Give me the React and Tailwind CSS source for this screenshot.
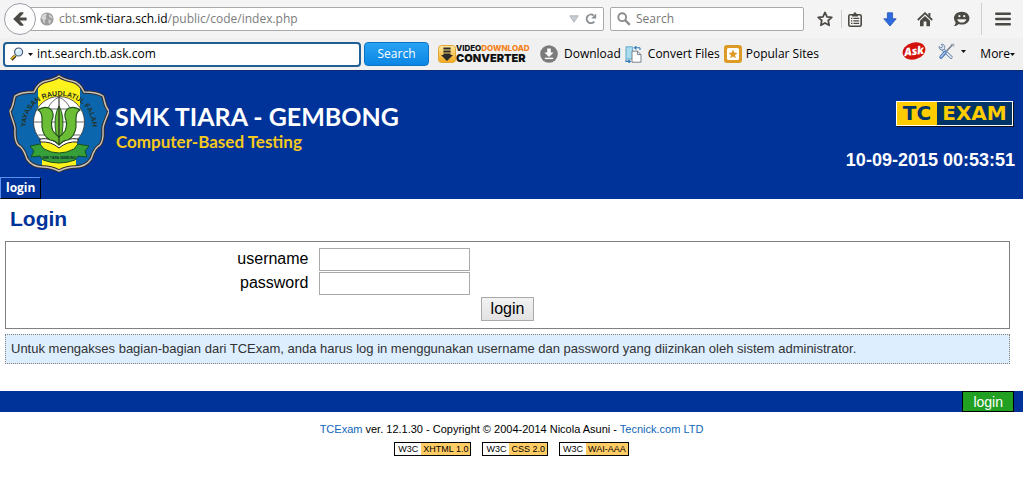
const uiFont = "font-['Open_Sans','Noto_Sans',sans-serif]";

function BackIcon() {
  return (
    <svg viewBox="0 0 16 16" className="size-4">
      <path d="M9 1.2 L11.4 1.2 L11.4 2.6 L7.6 6.5 H14.6 V9.5 H7.6 L11.4 13.4 V14.8 H8.2 L1.2 8 L8 1.2 Z" fill="#4b4943" />
    </svg>
  );
}

function GlobeIcon() {
  return (
    <svg viewBox="0 0 14 14" className="size-3.5">
      <circle cx="7" cy="7" r="6.6" fill="#9c9c9c" />
      <path d="M2 3.5 L5 1.6 L7 2.6 L5.6 4.6 L6.6 6.6 L4.6 8.6 L5.2 11.4 L3.4 10.2 L2.6 7.2 L1 6 Z" fill="#d6d6d6" />
      <path d="M8.8 2 L12 4.4 L12.6 7 L10.6 6 L9 4.6 Z M8.4 7.4 L11.2 8.2 L10.6 10.6 L8.8 12.2 Z" fill="#cfcfcf" />
    </svg>
  );
}

function ReloadIcon() {
  return (
    <svg viewBox="0 0 12 12" className="size-3">
      <path d="M9.3 8.6 A4.3 4.3 0 1 1 8.6 2.4" fill="none" stroke="#8a8f94" strokeWidth="1.9" />
      <path d="M11.2 0.4 V5.4 H6.2 Z" fill="#8a8f94" />
    </svg>
  );
}

function LensIcon() {
  return (
    <svg viewBox="0 0 14 14" className="size-3.5 shrink-0">
      <circle cx="5.2" cy="5.2" r="3.9" fill="none" stroke="#8c8c8c" strokeWidth="1.9" />
      <path d="M8 8 L12.8 12.8" stroke="#8c8c8c" strokeWidth="2.4" />
    </svg>
  );
}

function GoldLensIcon() {
  return (
    <svg viewBox="0 0 14 14" className="size-3.5 shrink-0">
      <path d="M5.4 8.6 L1.4 12.6" stroke="#3b3210" strokeWidth="3.2" />
      <path d="M5 8.4 L1.2 12.2" stroke="#e2b92c" strokeWidth="1.6" />
      <circle cx="8.6" cy="5" r="4" fill="#cfeef9" stroke="#4a5a78" strokeWidth="1.2" />
      <path d="M6.4 4.6 A2.4 2.4 0 0 1 9 2.6" fill="none" stroke="#fff" strokeWidth="1.2" />
    </svg>
  );
}

function StarIcon() {
  return (
    <svg viewBox="0 0 16 16" className="size-4">
      <path d="M8 1.4 L10 5.8 L14.8 6.3 L11.2 9.5 L12.2 14.3 L8 11.9 L3.8 14.3 L4.8 9.5 L1.2 6.3 L6 5.8 Z" fill="none" stroke="#4b4943" strokeWidth="1.7" strokeLinejoin="round" />
    </svg>
  );
}

function ListIcon() {
  return (
    <svg viewBox="0 0 14 15" className="h-[15px] w-3.5">
      <rect x="0.8" y="2.8" width="12.4" height="11.4" rx="1.4" fill="#f6f6f6" stroke="#4b4943" strokeWidth="1.6" />
      <path d="M4 4.4 V2 H5.4 L6 0.4 H8 L8.6 2 H10 V4.4 Z" fill="#4b4943" />
      <path d="M3 6.4 H4.4 M3 8.9 H4.4 M3 11.4 H4.4 M5.4 6.4 H11.2 M5.4 8.9 H11.2 M5.4 11.4 H11.2" stroke="#4b4943" strokeWidth="1.4" />
    </svg>
  );
}

function DownloadsIcon() {
  return (
    <svg viewBox="0 0 14 15" className="h-[15px] w-3.5">
      <path d="M4.4 0.8 H9.6 V6.8 H13.2 L7 14 L0.8 6.8 H4.4 Z" fill="#2f6be0" stroke="#2450b4" strokeWidth="0.8" />
    </svg>
  );
}

function HomeIcon() {
  return (
    <svg viewBox="0 0 16 15" className="h-[15px] w-4">
      <path d="M0.8 8 L8 1.2 L15.2 8" fill="none" stroke="#4b4943" strokeWidth="1.8" />
      <path d="M11.4 1 H13.4 V5 L11.4 3 Z" fill="#4b4943" />
      <path d="M8 4 L13 8.8 V14.2 H9.4 V9.6 H6.6 V14.2 H3 V8.8 Z" fill="#4b4943" />
    </svg>
  );
}

function SmileyIcon() {
  return (
    <svg viewBox="0 0 17 16" className="h-4 w-[17px]">
      <path d="M8.8 0.8 C13.2 0.8 16.4 3.6 16.4 7.2 C16.4 10.9 13.2 13.6 8.8 13.6 C7.6 13.6 6.6 13.4 5.6 13 C4.4 14.4 2.8 15 0.8 15 C2 14 2.6 12.6 2.6 11.2 C1.6 10 1 8.7 1 7.2 C1 3.6 4.4 0.8 8.8 0.8 Z" fill="#4b4943" />
      <circle cx="6.4" cy="5.2" r="1.1" fill="#f1f1f1" />
      <circle cx="11.2" cy="5.2" r="1.1" fill="#f1f1f1" />
      <path d="M4.2 8.2 H13.4 C12.8 10.4 11.2 11.6 8.8 11.6 C6.4 11.6 4.8 10.4 4.2 8.2 Z" fill="#f1f1f1" />
    </svg>
  );
}

function MenuIcon() {
  return (
    <svg viewBox="0 0 16 14" className="h-3.5 w-4">
      <path d="M1.2 1.8 H14.8 M1.2 7 H14.8 M1.2 12.2 H14.8" stroke="#4b4943" strokeWidth="2.4" strokeLinecap="round" />
    </svg>
  );
}

function Caret() {
  return (
    <svg viewBox="0 0 5 3" className="h-[3px] w-[5px] shrink-0">
      <path d="M0 0 H5 L2.5 3 Z" fill="#111" />
    </svg>
  );
}

function ConverterLogo() {
  return (
    <a href="#converter" aria-label="Video Download Converter" className="flex items-center">
      <svg viewBox="0 0 18 18" className="size-[18px] shrink-0">
        <defs>
          <linearGradient id="gold" x1="0" y1="0" x2="0" y2="1">
            <stop offset="0" stopColor="#ffe9a0" />
            <stop offset="1" stopColor="#f2a81c" />
          </linearGradient>
        </defs>
        <rect x="0.5" y="0.5" width="17" height="17" rx="3" fill="url(#gold)" stroke="#e0a63a" />
        <path d="M5.4 2.6 H12.6 V4.4 H5.4 Z M5.4 5.6 H12.6 V7.4 H5.4 Z M5.4 8.4 H12.6 V10 H15 L9 16 L3 10 H5.4 Z" fill="#2a2a2a" />
      </svg>
      <svg viewBox="0 0 76 22" className="h-[22px] w-[76px] shrink-0" fontFamily="Inter, 'Liberation Sans', sans-serif">
        <text x="0" y="8" fontSize="8" fontWeight="800" fill="#111">
          VIDEO<tspan fill="#f58220">DOWNLOAD</tspan>
        </text>
        <text x="0" y="19" fontSize="11" fontWeight="900" fill="#111">CONVERTER</text>
      </svg>
    </a>
  );
}

function DownloadBadge() {
  return (
    <svg viewBox="0 0 18 18" className="size-[18px] shrink-0">
      <circle cx="9" cy="9" r="8.8" fill="#7b7b7b" />
      <path d="M7.2 3.4 H10.8 V7.4 H13.6 L9 12 L4.4 7.4 H7.2 Z" fill="#fff" />
      <path d="M4.8 13.4 H13.2" fill="none" stroke="#fff" strokeWidth="1.4" />
    </svg>
  );
}

function ConvertIcon() {
  return (
    <svg viewBox="0 0 17 17" className="size-[17px] shrink-0">
      <path d="M1 0.8 H7.6 V13 H1 Z" fill="#a9dcef" stroke="#5aa5c4" strokeWidth="0.9" />
      <path d="M7 5.2 H12.4 L16 8.6 V16.2 H7 Z" fill="#fff" stroke="#6c7780" strokeWidth="0.9" />
      <path d="M12.4 5.2 V8.6 H16" fill="none" stroke="#6c7780" strokeWidth="0.9" />
      <path d="M9.6 1.8 H15 M11.4 0.2 L9.4 1.8 L11.4 3.4 M15 1.8 V4 M1 13.6 V15.4 H5 M3.4 13.8 L5.4 15.4 L3.4 17" fill="none" stroke="#3179b8" strokeWidth="1.1" />
    </svg>
  );
}

function PopularIcon() {
  return (
    <svg viewBox="0 0 18 18" className="size-[18px] shrink-0">
      <rect width="18" height="18" rx="3" fill="#dd9a24" />
      <rect x="3" y="3" width="12" height="12" rx="1.6" fill="#fff" />
      <path d="M9 4.6 L10.3 7.6 L13.5 7.9 L11.1 10 L11.8 13.2 L9 11.5 L6.2 13.2 L6.9 10 L4.5 7.9 L7.7 7.6 Z" fill="#dd9a24" />
    </svg>
  );
}

function AskLogo() {
  return (
    <svg viewBox="0 0 24 20" className="h-5 w-6">
      <ellipse cx="12" cy="10" rx="11.6" ry="8.4" fill="#d4120c" transform="rotate(-16 12 10)" />
      <text x="12" y="14" fontFamily="'Open Sans', sans-serif" fontSize="11" fontWeight="800" fontStyle="italic" fill="#fff" textAnchor="middle" transform="rotate(-8 12 10)">Ask</text>
    </svg>
  );
}

function ToolsIcon() {
  return (
    <svg viewBox="0 0 17 17" className="size-[17px]">
      <path d="M4 5.6 L13 14.2" stroke="#56749c" strokeWidth="3.2" strokeLinecap="round" />
      <path d="M4 5.6 L13 14.2" stroke="#e2ecf6" strokeWidth="1.8" strokeLinecap="round" />
      <path d="M1 3.4 L3 5.2 L4.8 3.6 L3.2 1.2 C6 1 7.4 3 6.6 5.4 L5 7 C2.6 7.4 1 6 1 3.4 Z" fill="#e2ecf6" stroke="#56749c" strokeWidth="0.8" />
      <path d="M14.6 1.6 L8.6 8" stroke="#7b8590" strokeWidth="1.6" />
      <path d="M7 9.6 L3 14.2" stroke="#4a74b4" strokeWidth="3.4" strokeLinecap="round" />
      <path d="M7 9.4 L3 14" stroke="#a8c6ee" strokeWidth="1.4" strokeLinecap="round" />
      <path d="M13.4 1.2 L16 1 L15.6 3.4 Z" fill="#dfe6ee" stroke="#7b8590" strokeWidth="0.6" />
    </svg>
  );
}

const crest =
  "M49 2 C53 5 57 6 62 7 C67 8 71 11 74 18 C80 18 87 18 93 22 C95 27 94 32 99 37 C97 43 94 48 93 54 C93 60 94 66 90 71 C84 74 83 80 81 85 C77 91 71 93 65 93 C58 93 53 95 49 97 C45 95 40 93 33 93 C27 93 21 91 17 85 C15 80 14 74 8 71 C4 66 5 60 5 54 C4 48 1 43 0 37 C4 32 3 27 5 22 C11 18 18 18 24 18 C27 11 31 8 36 7 C41 6 45 5 49 2 Z";

function SchoolCrest() {
  return (
    <svg viewBox="-1 0 100 100" className="size-[100px] shrink-0" role="img" aria-label="SMK Tiara Gembong">
      <defs>
        <clipPath id="crest-clip">
          <path d={crest} />
        </clipPath>
        <path id="motto" d="M16 57 C12 10 86 10 82 57" />
      </defs>
      <path d={crest} fill="#0b66ae" />
      <g clipPath="url(#crest-clip)">
        <path d="M28 0 H70 V32 L66 38 V100 H32 V38 L28 32 Z" fill="#fdf21c" />
      </g>
      <path d={crest} fill="none" stroke="#332f30" strokeWidth="3.6" />
      <path d={crest} fill="none" stroke="#c9c4bd" strokeWidth="1.4" />
      <circle cx="49" cy="48" r="25.5" fill="#fff" stroke="#333" strokeWidth="0.8" />
      <path d="M24 48 H74 M28 35 H70 M28 61 H70 M49 23 C30 32 30 64 49 73 M49 23 C68 32 68 64 49 73" fill="none" stroke="#444" strokeWidth="0.8" />
      <path d="M31 68 Q41 64 49 72 Q57 64 67 68 V80 H31 Z" fill="#fdf21c" />
      <path d="M30 65 Q41 63 49 71 Q57 63 68 65 V68 Q57 67 49 74 Q41 67 30 68 Z" fill="#fff" stroke="#222" strokeWidth="1" />
      <path d="M28 36 Q33 32 39 34 Q44 37 43 43 Q40 50 43 57 Q46 61 49 63 Q52 61 55 57 Q58 50 55 43 Q54 37 59 34 Q65 32 70 36 Q66 38 66 45 V53 Q65 62 58 66 Q53 66 49 71 Q45 66 40 66 Q33 62 32 53 V45 Q32 38 28 36 Z" fill="#6abd34" stroke="#1e4d1b" strokeWidth="1.1" />
      <path d="M49 32 Q43 42 46 60 L49 63 L52 60 Q55 42 49 32 Z" fill="#6abd34" stroke="#1e4d1b" strokeWidth="0.9" />
      <path d="M49 23 V70" stroke="#222" strokeWidth="1.1" />
      <path d="M20 72 L30 70 L34 75 Q49 83 64 75 L68 70 L79 72 L75 77 L77 83 L68 82 L65 86 Q49 92 33 86 L30 82 L21 83 L24 77 Z" fill="#35a03a" stroke="#174d1c" strokeWidth="1" />
      <text x="49" y="85" fontFamily="'Liberation Sans', sans-serif" fontSize="3" fontWeight="700" fill="#123" textAnchor="middle">SMK TIARA GEMBONG</text>
      <text fontFamily="'Liberation Sans', sans-serif" fontSize="7" fontWeight="700" fill="#26311c">
        <textPath href="#motto" startOffset="50%" textAnchor="middle">YAYASAN RAUDLATUL FALAH</textPath>
      </text>
    </svg>
  );
}

function NavBar() {
  return (
    <div className="flex h-[38px] items-center bg-[#f4f4f4] pl-1">
      <button aria-label="Back" className="z-10 flex size-8 shrink-0 items-center justify-center rounded-full border border-[#9a9fa8] bg-[#fbfbfb]">
        <BackIcon />
      </button>
      <div className="-ml-2 flex h-6 flex-1 items-center rounded-xs border border-[#a9a9a9] bg-white pr-1.5 pl-[11px]">
        <GlobeIcon />
        <div className="ml-[5px] flex-1 text-xs text-[#7c7c7c]">
          cbt.<span className="text-black">smk-tiara.sch.id</span>/public/code/index.php
        </div>
        <svg viewBox="0 0 10 8" className="mr-1.5 h-2 w-2.5">
          <path d="M0.8 0.8 H9.2 L5 7.2 Z" fill="#c9ccd2" stroke="#a5a9b0" strokeWidth="0.8" />
        </svg>
        <button aria-label="Reload">
          <ReloadIcon />
        </button>
      </div>
      <label className="ml-1.5 flex h-6 w-[194px] items-center gap-[5px] rounded-xs border border-[#a9a9a9] bg-white px-1.5">
        <LensIcon />
        <input aria-label="Search the web" placeholder="Search" className="w-full text-xs outline-none placeholder:text-[#777]" />
      </label>
      <div className="flex items-center pl-[13px]">
        <button aria-label="Bookmark"><StarIcon /></button>
        <div className="ml-2 h-[18px] w-px bg-[#cfcfcf]" />
        <button aria-label="Bookmarks list" className="ml-1.5"><ListIcon /></button>
        <button aria-label="Downloads" className="ml-[21px]"><DownloadsIcon /></button>
        <button aria-label="Home" className="ml-5"><HomeIcon /></button>
        <button aria-label="Chat" className="ml-5"><SmileyIcon /></button>
        <div className="ml-[11px] h-8 w-px bg-[#cfcfcf]" />
        <button aria-label="Menu" className="mr-3 ml-[13px]"><MenuIcon /></button>
      </div>
    </div>
  );
}

function Toolbar() {
  return (
    <div className="flex h-[33px] items-center border-b border-[#0b2a7a] bg-[#f0f0f0] pr-2 pl-[3px]">
      <div className="flex h-[25px] w-[358px] items-center gap-1 rounded-sm border-2 border-[#1f5f93] bg-white pl-[5px]">
        <GoldLensIcon />
        <Caret />
        <input aria-label="Toolbar search" defaultValue="int.search.tb.ask.com" className="min-w-0 flex-1 text-xs text-black outline-none" />
      </div>
      <button className="ml-[3px] h-6 w-[65px] rounded-sm border border-[#0a73c4] bg-linear-to-b from-[#27a3f4] to-[#0a86e4] text-xs leading-5 text-white">
        Search
      </button>
      <div className="ml-[9px] flex items-center text-xs whitespace-nowrap text-black">
        <ConverterLogo />
        <a href="#download" className="ml-2 flex items-center gap-1.5"><DownloadBadge />Download</a>
        <a href="#convert" className="ml-1 flex items-center gap-1.5"><ConvertIcon />Convert Files</a>
        <a href="#popular" className="ml-1 flex items-center gap-1"><PopularIcon />Popular Sites</a>
      </div>
      <div className="ml-auto flex items-center text-xs text-black">
        <a href="#ask" aria-label="Ask" className="mb-1.5"><AskLogo /></a>
        <button aria-label="Tools" className="mb-1.5 ml-3 flex items-center gap-1.5"><ToolsIcon /><Caret /></button>
        <button className="ml-3.5 flex items-center">More<Caret /></button>
      </div>
    </div>
  );
}

function SiteHeader() {
  return (
    <header className="bg-[#003399] text-white">
      <div className="flex h-[106px] justify-between pt-[3px] pr-2 pl-[9px]">
        <div className="flex gap-1.5">
          <SchoolCrest />
          <div className="pt-[27px] font-[Lato,sans-serif] font-bold">
            <div className="text-[25px] leading-[30px]">SMK TIARA - GEMBONG</div>
            <div className="pl-px text-[17px] leading-[21px] text-[#f6c91c]">Computer-Based Testing</div>
          </div>
        </div>
        <div className="flex flex-col items-end pt-[27px]">
          <a href="#tcexam" aria-label="TCExam" className="mr-0.5 flex h-[25px] border border-white bg-[#003366] font-['DejaVu_Sans',sans-serif] text-xl leading-[23px] font-bold shadow-[1px_1px_0_#111]">
            <span className="w-10 bg-[#ffcc00] text-center text-[#003366]">TC</span>
            <span className="w-[75px] text-center text-[#ffcc00]">EXAM</span>
          </a>
          <div className="mt-6 text-lg leading-5 font-bold">10-09-2015 00:53:51</div>
        </div>
      </div>
      <nav className="flex">
        <a href="#login" className="h-[22px] border border-t-[#5c8ff0] border-r-black border-b-black border-l-[#5c8ff0] px-[5px] font-['Open_Sans',sans-serif] text-xs leading-5 font-bold">login</a>
      </nav>
    </header>
  );
}

function Field({ id, label, type }) {
  return (
    <div className="grid grid-cols-[30%_1fr] items-center gap-x-2.5">
      <label htmlFor={id} className="pl-1 text-right text-base leading-6">{label}</label>
      <input id={id} type={type} className="h-[23px] w-[151px] border border-[#a9a9a9] bg-white px-1" />
    </div>
  );
}

function LoginForm() {
  return (
    <form className="flex flex-col border border-[#808080] px-1 pt-[5px] pb-[7px]" onSubmit={e => e.preventDefault()}>
      <Field id="username" label="username" type="text" />
      <Field id="password" label="password" type="password" />
      <button className="mt-0.5 h-6 w-[53px] self-center border border-[#a9a9a9] bg-linear-to-b from-[#f2f2f2] to-[#e2e2e2] text-base leading-5">login</button>
    </form>
  );
}

const badges = ["XHTML 1.0", "CSS 2.0", "WAI-AAA"];

export default function App() {
  return (
    <div className="min-h-screen bg-white font-['Liberation_Sans',Arial,sans-serif] text-black">
      <div className={uiFont}>
        <NavBar />
        <Toolbar />
      </div>
      <SiteHeader />
      <main className="pr-[13px] pl-[5px]">
        <h1 className="pt-1.5 pl-[5px] text-[21px] leading-7 font-bold text-[#003399]">Login</h1>
        <div className="mt-2">
          <LoginForm />
        </div>
        <p className="mt-[5px] border border-dotted border-[#808080] bg-[#ddeeff] px-[5px] py-1 text-[13px] leading-5 text-[#333]">
          Untuk mengakses bagian-bagian dari TCExam, anda harus log in menggunakan username dan password yang diizinkan oleh sistem administrator.
        </p>
      </main>
      <footer className="mt-[27px]">
        <div className="flex justify-end bg-[#003399] pr-[9px]">
          <a href="#login" className="h-[21px] border border-black bg-[#22a022] px-2.5 text-sm leading-5 text-white">login</a>
        </div>
        <p className="mt-[9px] text-center text-[11px] leading-4">
          <a href="#tcexam" className="text-[#1166bb]">TCExam</a> ver. 12.1.30 - Copyright © 2004-2014 Nicola Asuni -{" "}
          <a href="#tecnick" className="text-[#1166bb]">Tecnick.com LTD</a>
        </p>
        <div className="mt-[5px] flex justify-center gap-[11px] text-[9px] leading-3">
          {badges.map(name => (
            <a key={name} href="#w3c" className="flex border border-black">
              <span className="px-[3px]">W3C</span>
              <span className="bg-[#ffcc66] px-0.5">{name}</span>
            </a>
          ))}
        </div>
      </footer>
    </div>
  );
}
